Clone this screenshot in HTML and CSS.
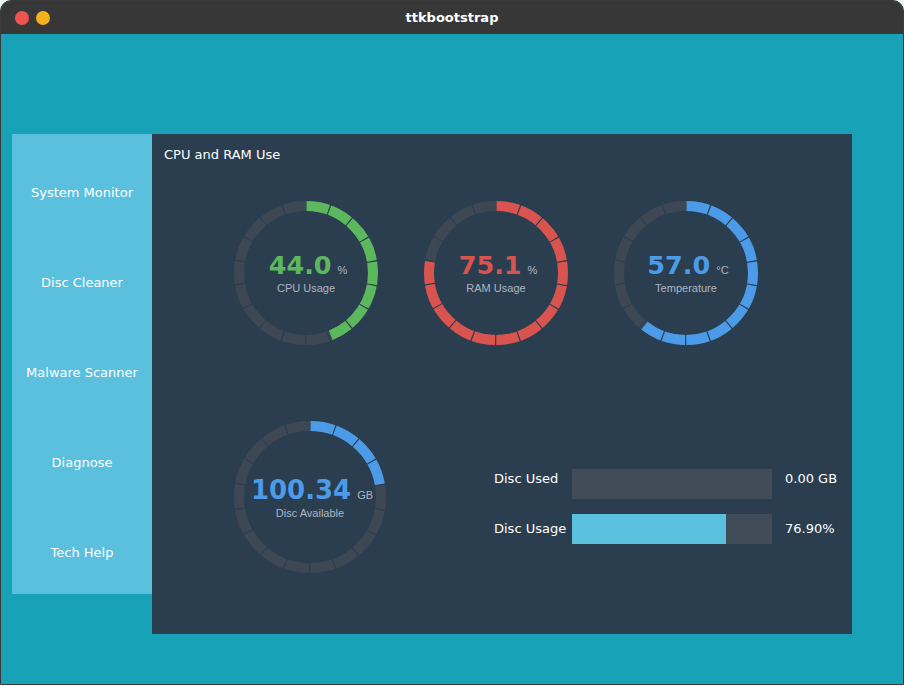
FILE: index.html
```html
<!DOCTYPE html>
<html>
<head>
<meta charset="utf-8">
<title>ttkbootstrap</title>
<link rel="stylesheet" href="styles.css">
</head>
<body>
<div class="window">
  <div class="titlebar">
    <div class="dots"><span class="dot dot-red"></span><span class="dot dot-yellow"></span></div>
    <div class="title">ttkbootstrap</div>
    <div></div>
  </div>
  <div class="content">
    <nav class="sidebar">
      <div class="nav-item">System Monitor</div>
      <div class="nav-item">Disc Cleaner</div>
      <div class="nav-item">Malware Scanner</div>
      <div class="nav-item">Diagnose</div>
      <div class="nav-item">Tech Help</div>
    </nav>
    <main class="panel">
      <div class="panel-title">CPU and RAM Use</div>
      <div class="row row-top">
        <div class="gauge gauge-sm success">
          <svg class="ring" width="144" height="144" viewBox="0 0 144 144">
            <circle class="track" cx="72" cy="72" r="67"/>
            <circle class="fill" cx="72" cy="72" r="67" stroke-dasharray="184.8 1000" transform="rotate(-90 72 72)"/>
            <circle class="ticks" cx="72" cy="72" r="67" stroke-dasharray="1.2 22.187" stroke-dashoffset="0.6" transform="rotate(-90 72 72)"/>
          </svg>
          <div class="gauge-text">
            <div class="gauge-value"><span class="num">44.0</span><span class="unit">%</span></div>
            <div class="gauge-label">CPU Usage</div>
          </div>
        </div>
        <div class="gauge gauge-sm danger">
          <svg class="ring" width="144" height="144" viewBox="0 0 144 144">
            <circle class="track" cx="72" cy="72" r="67"/>
            <circle class="fill" cx="72" cy="72" r="67" stroke-dasharray="326.5 1000" transform="rotate(-90 72 72)"/>
            <circle class="ticks" cx="72" cy="72" r="67" stroke-dasharray="1.2 22.187" stroke-dashoffset="0.6" transform="rotate(-90 72 72)"/>
          </svg>
          <div class="gauge-text">
            <div class="gauge-value"><span class="num">75.1</span><span class="unit">%</span></div>
            <div class="gauge-label">RAM Usage</div>
          </div>
        </div>
        <div class="gauge gauge-sm primary">
          <svg class="ring" width="144" height="144" viewBox="0 0 144 144">
            <circle class="track" cx="72" cy="72" r="67"/>
            <circle class="fill" cx="72" cy="72" r="67" stroke-dasharray="254.9 1000" transform="rotate(-90 72 72)"/>
            <circle class="ticks" cx="72" cy="72" r="67" stroke-dasharray="1.2 22.187" stroke-dashoffset="0.6" transform="rotate(-90 72 72)"/>
          </svg>
          <div class="gauge-text">
            <div class="gauge-value"><span class="num">57.0</span><span class="unit">°C</span></div>
            <div class="gauge-label">Temperature</div>
          </div>
        </div>
      </div>
      <div class="row row-bottom">
        <div class="gauge gauge-lg primary">
          <svg class="ring" width="152" height="152" viewBox="0 0 152 152">
            <circle class="track" cx="76" cy="76" r="71"/>
            <circle class="fill" cx="76" cy="76" r="71" stroke-dasharray="99.1 1000" transform="rotate(-90 76 76)"/>
            <circle class="ticks" cx="76" cy="76" r="71" stroke-dasharray="1.2 23.584" stroke-dashoffset="0.6" transform="rotate(-90 76 76)"/>
          </svg>
          <div class="gauge-text">
            <div class="gauge-value"><span class="num">100.34</span><span class="unit">GB</span></div>
            <div class="gauge-label">Disc Available</div>
          </div>
        </div>
        <div class="disc-stats">
          <div class="stat-label raised">Disc Used</div>
          <div class="bar"><div class="bar-fill" style="width:0%"></div></div>
          <div class="stat-value raised">0.00 GB</div>
          <div class="stat-label">Disc Usage</div>
          <div class="bar"><div class="bar-fill" style="width:76.9%"></div></div>
          <div class="stat-value">76.90%</div>
        </div>
      </div>
    </main>
  </div>
</div>
</body>
</html>
```

FILE: styles.css
```css
* { box-sizing: border-box; }

html, body {
  margin: 0;
  padding: 0;
}

body {
  width: 904px;
  height: 686px;
  overflow: hidden;
  background: #f4f4f4;
  font-family: "DejaVu Sans", "Liberation Sans", sans-serif;
}

.window {
  width: 904px;
  height: 685px;
  border: 1px solid #3a3a3a;
  border-radius: 11px 11px 0 0;
  overflow: hidden;
  display: flex;
  flex-direction: column;
  background: #17a2b8;
}

.titlebar {
  flex: none;
  height: 33px;
  background: #373737;
  display: grid;
  grid-template-columns: 1fr auto 1fr;
  align-items: center;
}

.dots {
  display: flex;
  gap: 7px;
  padding-left: 14px;
  padding-top: 1px;
}

.dot {
  width: 14px;
  height: 14px;
  border-radius: 50%;
}

.dot-red { background: #ec5450; }
.dot-yellow { background: #f4b21c; }

.title {
  color: #ffffff;
  font-weight: bold;
  font-size: 13px;
  line-height: 16px;
  padding-top: 1px;
}

.content {
  flex: 1;
  display: flex;
  align-items: flex-start;
  padding: 100px 0 0 11px;
}

.sidebar {
  width: 140px;
  height: 460px;
  background: #5bc0de;
  padding-top: 13px;
  display: flex;
  flex-direction: column;
  overflow: hidden;
}

.nav-item {
  flex: none;
  height: 90px;
  display: flex;
  align-items: center;
  justify-content: center;
  color: #ffffff;
  font-size: 13px;
}

.panel {
  width: 700px;
  height: 500px;
  background: #2b3e50;
  color: #ffffff;
}

.panel-title {
  padding: 12px 0 0 12px;
  font-size: 13px;
  line-height: 17px;
}

.row {
  display: flex;
  align-items: flex-start;
  padding-left: 82px;
}

.row-top {
  margin-top: 38px;
  gap: 46px;
}

.row-bottom {
  margin-top: 76px;
}

.gauge {
  display: grid;
  flex: none;
}

.gauge > * {
  grid-area: 1 / 1;
}

.gauge-sm { width: 144px; height: 144px; }
.gauge-lg { width: 152px; height: 152px; }

.ring { display: block; }

.ring circle {
  fill: none;
  stroke-width: 10;
}

.ring .track { stroke: #3e4855; }
.ring .ticks { stroke: #2b3e50; stroke-width: 12; }

.success .fill { stroke: #5cb85c; }
.danger .fill { stroke: #d9534f; }
.primary .fill { stroke: #4c9be8; }

.success .num { color: #5cb85c; }
.danger .num { color: #d9534f; }
.primary .num { color: #4c9be8; }

.gauge-text {
  align-self: center;
  justify-self: center;
  display: flex;
  flex-direction: column;
  align-items: center;
  padding-top: 1px;
}

.gauge-lg .gauge-text { padding-top: 3px; }

.gauge-value {
  display: flex;
  align-items: baseline;
  gap: 6px;
  padding-left: 4px;
  height: 26px;
  line-height: 26px;
}

.num {
  font-family: "DejaVu Sans", sans-serif;
  font-weight: bold;
  font-size: 25.5px;
}

.gauge-lg .num { font-size: 26px; }

.unit,
.gauge-label {
  font-family: "Liberation Sans", Arial, sans-serif;
  font-size: 11px;
  line-height: 13px;
  color: #abb6c2;
}

.gauge-label {
  margin-top: 4px;
}

.disc-stats {
  margin-left: 108px;
  margin-top: 48px;
  display: grid;
  grid-template-columns: 78px 200px auto;
  grid-auto-rows: 30px;
  row-gap: 15px;
  align-items: center;
  font-size: 13px;
  color: #ffffff;
}

.stat-label {
  line-height: 16px;
}

.stat-value {
  margin-left: 13px;
  line-height: 16px;
}

.raised {
  margin-bottom: 10px;
}

.bar {
  height: 30px;
  background: #414c59;
  display: flex;
}

.bar-fill {
  height: 100%;
  background: #5bc0de;
}
```
